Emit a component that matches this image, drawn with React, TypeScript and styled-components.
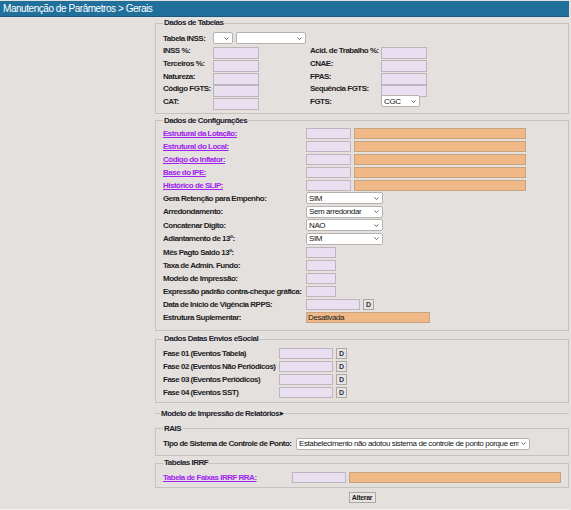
import React from "react";
import styled, { createGlobalStyle } from "styled-components";

const SANS = `"Liberation Sans", Arial, sans-serif`;

const GlobalStyle = createGlobalStyle`
  html, body {
    margin: 0;
    padding: 0;
    background: #e3e0de;
  }
  body {
    font-family: ${SANS};
  }
`;

const Page = styled.div`
  width: 569px;
  min-height: 508px;
  background: #e3e0de;
  border-bottom: 1px solid #f2f0ef;
`;

const TitleBar = styled.div`
  height: 15px;
  margin-top: 1px;
  padding-left: 3px;
  background: #21709b;
  border-bottom: 1px solid #195b80;
  color: #fff;
  font: 10px ${SANS};
  letter-spacing: -0.45px;
  line-height: 15px;
  white-space: nowrap;
`;

const Main = styled.div`
  display: flex;
  flex-direction: column;
  padding: 1px 0 0 155px;
`;

const Box = styled.fieldset<{ $mt: number; $pt: number; $pb: number }>`
  margin: ${(p) => p.$mt}px 0 0;
  padding: ${(p) => p.$pt}px 6px ${(p) => p.$pb}px 7px;
  border: 1px solid #c5c2c0;
  min-width: 0;
`;

const Collapsed = styled.fieldset<{ $mt: number }>`
  margin: ${(p) => p.$mt}px 0 0;
  padding: 0 0 0 5px;
  border: none;
  border-top: 1px solid #c5c2c0;
  min-width: 0;
`;

const Legend = styled.legend`
  padding: 0 1px;
  font: bold 8px ${SANS};
  letter-spacing: -0.5px;
  line-height: 10px;
  color: #1d1b2b;
  white-space: nowrap;
`;

const Arrow = styled.span`
  font-size: 5px;
  margin-left: 1px;
  vertical-align: 1px;
`;

const TableGrid = styled.div`
  display: grid;
  grid-template-columns: 50px 97px 71px 1fr;
  grid-auto-rows: 12.6px;
  align-items: center;
`;

const Row = styled.div<{ $h: number }>`
  display: flex;
  align-items: center;
  height: ${(p) => p.$h}px;
  gap: 3px;
`;

const Label = styled.div<{ $w?: number }>`
  ${(p) => (p.$w ? `width: ${p.$w - 3}px; flex: none;` : "")}
  font: bold 8px ${SANS};
  letter-spacing: -0.5px;
  color: #1f1d22;
  white-space: nowrap;
`;

const LinkLabel = styled.a<{ $w: number }>`
  width: ${(p) => p.$w - 3}px;
  flex: none;
  font: bold 8px ${SANS};
  letter-spacing: -0.5px;
  color: #a11ff0;
  text-decoration: underline;
  white-space: nowrap;
  cursor: pointer;
`;

const Field = styled.input<{ $w: number; $h?: number; $tone?: "lilac" | "orange" }>`
  box-sizing: border-box;
  width: ${(p) => p.$w}px;
  height: ${(p) => p.$h ?? 11}px;
  margin: 0;
  padding: 0 1px;
  flex: none;
  background: ${(p) => (p.$tone === "orange" ? "#efb886" : "#e9dff0")};
  border: 1px solid ${(p) => (p.$tone === "orange" ? "#c9a27e" : "#bcb6bc")};
  font: 8px ${SANS};
  letter-spacing: -0.4px;
  color: #222;
  outline: none;
`;

const SelectBox = styled.div<{ $w: number; $h?: number }>`
  box-sizing: border-box;
  width: ${(p) => p.$w}px;
  height: ${(p) => p.$h ?? 12}px;
  flex: none;
  display: flex;
  align-items: center;
  gap: 2px;
  padding: 0 3px 0 2px;
  background: #fff;
  border: 1px solid #b4b1af;
  border-radius: 2px;
  font: 8px ${SANS};
  letter-spacing: -0.4px;
  color: #151515;
  span {
    flex: 1;
    min-width: 0;
    overflow: hidden;
    white-space: nowrap;
  }
  svg {
    flex: none;
  }
`;

const DButton = styled.button`
  box-sizing: border-box;
  width: 11px;
  height: 11px;
  margin: 0;
  padding: 0;
  flex: none;
  background: #e6e3e1;
  border: 1px solid #aaa7a5;
  font: bold 7px ${SANS};
  color: #2c3550;
  line-height: 9px;
`;

const Footer = styled.div`
  display: flex;
  justify-content: center;
  margin-top: 4px;
`;

const SubmitButton = styled.button`
  box-sizing: border-box;
  width: 27px;
  height: 11px;
  margin: 0;
  padding: 0;
  background: #e8e5e3;
  border: 1px solid #a9a6a4;
  font: bold 7px ${SANS};
  letter-spacing: -0.3px;
  color: #222;
  line-height: 9px;
`;

function Chevron() {
  return (
    <svg width="5" height="3" viewBox="0 0 5 3">
      <path d="M0.5 0.5 L2.5 2.5 L4.5 0.5" fill="none" stroke="#555" strokeWidth="0.9" />
    </svg>
  );
}

function Select({ w, h, value = "" }: { w: number; h?: number; value?: string }) {
  return (
    <SelectBox $w={w} $h={h}>
      <span>{value}</span>
      <Chevron />
    </SelectBox>
  );
}

const tableRows: [string, string, boolean][] = [
  ["INSS %:", "Acid. de Trabalho %:", false],
  ["Terceiros %:", "CNAE:", false],
  ["Natureza:", "FPAS:", false],
  ["Código FGTS:", "Sequência FGTS:", false],
  ["CAT:", "FGTS:", true],
];

const links = [
  "Estrutural da Lotação:",
  "Estrutural do Local:",
  "Código do Inflator:",
  "Base do IPE:",
  "Histórico de SLIP:",
];

const selects: [string, string][] = [
  ["Gera Retenção para Empenho:", "SIM"],
  ["Arredondamento:", "Sem arredondar"],
  ["Concatenar Digito:", "NAO"],
  ["Adiantamento de 13º:", "SIM"],
];

const smallFields = [
  "Mês Pagto Saldo 13º:",
  "Taxa de Admin. Fundo:",
  "Modelo de Impressão:",
  "Expressão padrão contra-cheque gráfica:",
];

const fases = [
  "Fase 01 (Eventos Tabela)",
  "Fase 02 (Eventos Não Periódicos)",
  "Fase 03 (Eventos Periódicos)",
  "Fase 04 (Eventos SST)",
];

export default function App() {
  return (
    <Page>
      <GlobalStyle />
      <TitleBar>Manutenção de Parâmetros &gt; Gerais</TitleBar>
      <Main>
        <Box $mt={0} $pt={4} $pb={5}>
          <Legend>Dados de Tabelas</Legend>
          <TableGrid>
            <Label>Tabela INSS:</Label>
            <Row $h={12}>
              <Select w={20} />
              <Select w={70} />
            </Row>
            <div />
            <div />
            {tableRows.map(([left, right, isSelect]) => (
              <React.Fragment key={left}>
                <Label>{left}</Label>
                <div>
                  <Field $w={46} $h={12} readOnly />
                </div>
                <Label>{right}</Label>
                <div>
                  {isSelect ? <Select w={39} value="CGC" /> : <Field $w={46} $h={12} readOnly />}
                </div>
              </React.Fragment>
            ))}
          </TableGrid>
        </Box>

        <Box $mt={2} $pt={2} $pb={6}>
          <Legend>Dados de Configurações</Legend>
          {links.map((text) => (
            <Row $h={12.8} key={text}>
              <LinkLabel $w={143}>{text}</LinkLabel>
              <Field $w={45} readOnly />
              <Field $w={172} $tone="orange" readOnly />
            </Row>
          ))}
          {selects.map(([text, value]) => (
            <Row $h={13.5} key={text}>
              <Label $w={143}>{text}</Label>
              <Select w={77} value={value} />
            </Row>
          ))}
          {smallFields.map((text) => (
            <Row $h={13.1} key={text}>
              <Label $w={143}>{text}</Label>
              <Field $w={30} readOnly />
            </Row>
          ))}
          <Row $h={13.1}>
            <Label $w={143}>Data de Início de Vigência RPPS:</Label>
            <Field $w={54} readOnly />
            <DButton>D</DButton>
          </Row>
          <Row $h={13.1}>
            <Label $w={143}>Estrutura Suplementar:</Label>
            <Field $w={124} $tone="orange" value="Desativada" readOnly />
          </Row>
        </Box>

        <Box $mt={3} $pt={2.5} $pb={3}>
          <Legend>Dados Datas Envios eSocial</Legend>
          {fases.map((text) => (
            <Row $h={13} key={text}>
              <Label $w={116}>{text}</Label>
              <Field $w={54} readOnly />
              <DButton>D</DButton>
            </Row>
          ))}
        </Box>

        <Collapsed $mt={5}>
          <Legend>
            Modelo de Impressão de Relatórios<Arrow>▶</Arrow>
          </Legend>
        </Collapsed>

        <Box $mt={5} $pt={3.5} $pb={5}>
          <Legend>RAIS</Legend>
          <Row $h={13}>
            <Label $w={133}>Tipo de Sistema de Controle de Ponto:</Label>
            <Select
              w={234}
              value="Estabelecimento não adotou sistema de controle de ponto porque em"
            />
          </Row>
        </Box>

        <Box $mt={2} $pt={3} $pb={4}>
          <Legend>Tabelas IRRF</Legend>
          <Row $h={12}>
            <LinkLabel $w={129}>Tabela de Faixas IRRF RRA:</LinkLabel>
            <Field $w={54} readOnly />
            <Field $w={212} $tone="orange" readOnly />
          </Row>
        </Box>

        <Footer>
          <SubmitButton>Alterar</SubmitButton>
        </Footer>
      </Main>
    </Page>
  );
}
